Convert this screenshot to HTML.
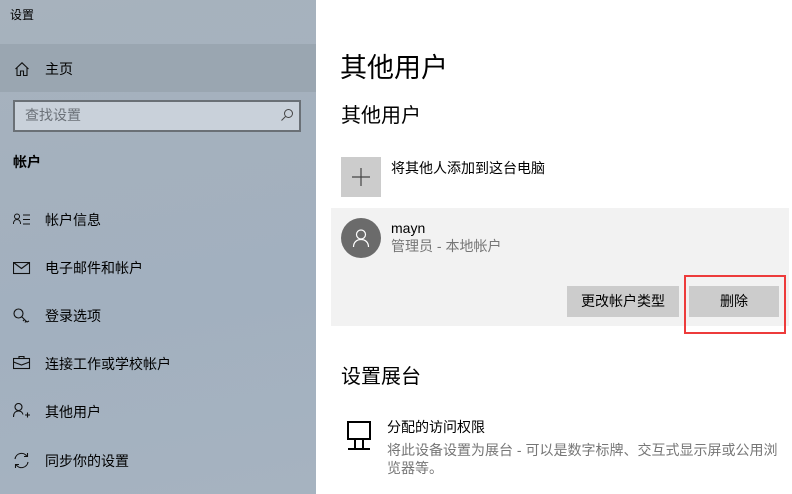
<!DOCTYPE html>
<html><head><meta charset="utf-8"><style>
*{margin:0;padding:0;box-sizing:border-box}
body{width:792px;height:494px;overflow:hidden;background:#fff;font-family:"Liberation Sans","Noto Sans CJK SC",sans-serif;color:#000;position:relative}
.a{position:absolute;white-space:nowrap}
#side{position:absolute;left:0;top:0;width:316px;height:494px;background:linear-gradient(170deg,#a7b2bd,#a2b0bf 60%,#a6b3c0)}
.it{font-size:14px;line-height:18px}
svg{position:absolute}
</style></head><body>
<div id="side">
<div class="a" style="left:10px;top:6px;font-size:12px">设置</div>
<div class="a" style="left:0;top:44px;width:316px;height:48px;background:#9aa6b1"></div>
<svg style="left:14px;top:61px" width="16" height="16" viewBox="0 0 16 16" fill="none" stroke="#111" stroke-width="1.1"><path d="M1.5 8 8 1.8 14.5 8M3 6.6V14.5h3.5V10h3v4.5H13V6.6"/></svg>
<div class="a it" style="left:45px;top:60px">主页</div>
<div class="a" style="left:13px;top:100px;width:288px;height:32px;border:2px solid #6a7076;background:#c9d1da"></div>
<div class="a it" style="left:25px;top:106px;color:#6b7178">查找设置</div>
<svg style="left:280px;top:108px" width="14" height="14" viewBox="0 0 14 14" fill="none" stroke="#444" stroke-width="1"><circle cx="8.5" cy="5.5" r="4"/><path d="M5.5 8.5 1.5 12.5"/></svg>
<div class="a it" style="left:13px;top:153px;font-weight:bold">帐户</div>
<svg style="left:13px;top:213px" width="20" height="14" viewBox="0 0 20 14" fill="none" stroke="#111" stroke-width="1"><circle cx="4" cy="3.5" r="2.5"/><path d="M0.5 11c0-3 1.5-4.5 3.5-4.5S7.5 8 7.5 11M10 2h7M10 6.5h7M10 11h7"/></svg>
<div class="a it" style="left:45px;top:211px">帐户信息</div>
<svg style="left:13px;top:262px" width="18" height="13" viewBox="0 0 18 13" fill="none" stroke="#111" stroke-width="1.1"><rect x="0.5" y="0.5" width="16" height="11"/><path d="M0.5 0.5 8.5 6.5 16.5 0.5"/></svg>
<div class="a it" style="left:45px;top:259px">电子邮件和帐户</div>
<svg style="left:13px;top:308px" width="18" height="18" viewBox="0 0 18 18" fill="none" stroke="#111" stroke-width="1.1"><circle cx="5.5" cy="5.5" r="4.5"/><path d="M8.5 8.5 14 14l2-1M11.5 11.5l-1.5 1.5M13 13l-1 1.5"/></svg>
<div class="a it" style="left:45px;top:307px">登录选项</div>
<svg style="left:13px;top:356px" width="18" height="14" viewBox="0 0 18 14" fill="none" stroke="#111" stroke-width="1.1"><rect x="0.5" y="2.5" width="16" height="10"/><path d="M6 2.5V0.5h5v2M0.5 6l8 3 8-3"/></svg>
<div class="a it" style="left:45px;top:355px">连接工作或学校帐户</div>
<svg style="left:13px;top:403px" width="18" height="17" viewBox="0 0 18 17" fill="none" stroke="#111" stroke-width="1.1"><circle cx="5.5" cy="4" r="3.5"/><path d="M0.5 14c0-4 2-6 5-6s4 1.5 4.5 3.5M12 12h5M14.5 9.5v5"/></svg>
<div class="a it" style="left:45px;top:403px">其他用户</div>
<svg style="left:13px;top:452px" width="17" height="17" viewBox="0 0 17 17" fill="none" stroke="#111" stroke-width="1.1"><path d="M2 7a6.5 6.5 0 0 1 12-2.5M14.5 1v3.5H11M15 10a6.5 6.5 0 0 1-12 2.5M2.5 16v-3.5H6"/></svg>
<div class="a it" style="left:45px;top:452px">同步你的设置</div>
</div>

<div class="a" style="left:340px;top:50px;font-size:27px;line-height:36px">其他用户</div>
<div class="a" style="left:341px;top:103px;font-size:20px;line-height:26px">其他用户</div>
<div class="a" style="left:341px;top:157px;width:40px;height:40px;background:#ccc"></div>
<svg style="left:351px;top:167px" width="20" height="20" viewBox="0 0 20 20" stroke="#444" stroke-width="1.2"><path d="M10 1v18M1 10h18"/></svg>
<div class="a it" style="left:391px;top:159px">将其他人添加到这台电脑</div>
<div class="a" style="left:331px;top:208px;width:458px;height:118px;background:#f2f2f2"></div>
<div class="a" style="left:341px;top:218px;width:40px;height:40px;border-radius:50%;background:#6b6b6b"></div>
<svg style="left:351px;top:228px" width="20" height="20" viewBox="0 0 20 20" fill="none" stroke="#fff" stroke-width="1.2"><circle cx="10" cy="6.5" r="4.5"/><path d="M2.5 19c0-5 3.5-7.5 7.5-7.5s7.5 2.5 7.5 7.5"/></svg>
<div class="a it" style="left:391px;top:219px">mayn</div>
<div class="a it" style="left:391px;top:237px;color:#767676">管理员 - 本地帐户</div>
<div class="a it" style="left:567px;top:286px;width:112px;height:31px;background:#ccc;text-align:center;line-height:31px">更改帐户类型</div>
<div class="a it" style="left:689px;top:286px;width:90px;height:31px;background:#ccc;text-align:center;line-height:31px">删除</div>
<div class="a" style="left:684px;top:275px;width:102px;height:59px;border:2px solid #ed3b3b"></div>
<div class="a" style="left:341px;top:364px;font-size:20px;line-height:26px">设置展台</div>
<svg style="left:346px;top:421px" width="26" height="30" viewBox="0 0 26 30" fill="none" stroke="#000" stroke-width="2"><rect x="2" y="1" width="22" height="17"/><path d="M9 18v10M17 18v10M2 28h22"/></svg>
<div class="a it" style="left:387px;top:418px">分配的访问权限</div>
<div class="a it" style="left:387px;top:441px;color:#767676;line-height:18px">将此设备设置为展台 - 可以是数字标牌、交互式显示屏或公用浏<br>览器等。</div>
</body></html>
